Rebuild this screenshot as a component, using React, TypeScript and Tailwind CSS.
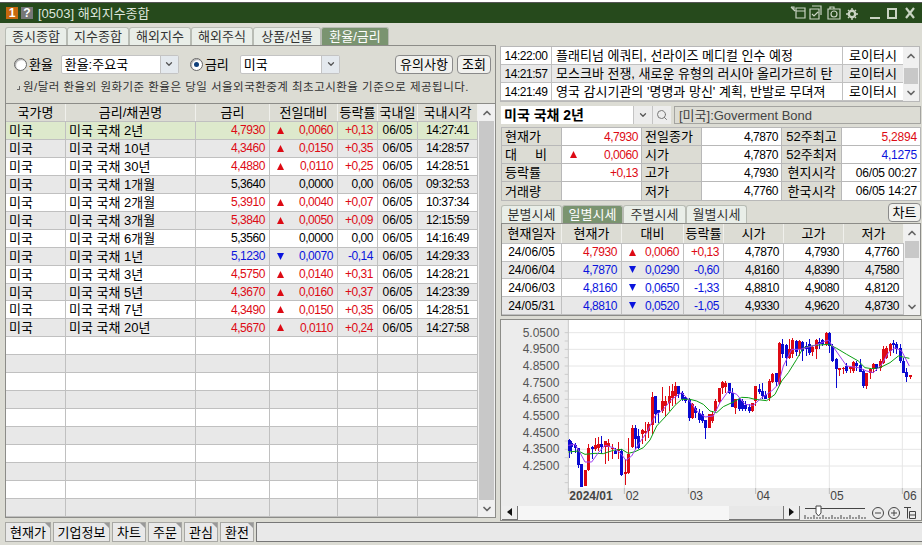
import React from "react";
import { ChevronUp, ChevronDown, Search } from "lucide-react";

const RED = "text-[#dd0a14]";
const BLUE = "text-[#0a14dd]";
const NUM = "text-[12px] tracking-[-0.45px]";
const PLAIN = "text-[12px]";

type Tone = "r" | "b" | "k";
const toneClass = (t: Tone) => (t === "r" ? RED : t === "b" ? BLUE : "text-black");

const Tri = ({ up }: { up: boolean }) => (
  <svg width="9" height="9" viewBox="0 0 9 9" className="shrink-0">
    <polygon points={up ? "4.5,1 8,8 1,8" : "1,1 8,1 4.5,8"} fill={up ? "#dd0a14" : "#0a14dd"} />
  </svg>
);

const VScroll = ({ thumbClass, wide }: { thumbClass: string; wide?: boolean }) => (
  <div className={`flex flex-col bg-[#f0f0f0] ${wide ? "w-[18px]" : "w-[17px]"}`}>
    <div className="flex h-[17px] items-center justify-center">
      <ChevronUp size={12} strokeWidth={3.5} color="#666" />
    </div>
    <div className="flex min-h-0 flex-1 flex-col px-[1px]">
      <div className={`bg-[#c8c8c8] ${thumbClass}`} />
    </div>
    <div className="flex h-[17px] items-center justify-center">
      <ChevronDown size={12} strokeWidth={3.5} color="#666" />
    </div>
  </div>
);

const titleTabs = ["종시종합", "지수종합", "해외지수", "해외주식", "상품/선물", "환율/금리"];
const titleTabW = ["w-[62px]", "w-[62px]", "w-[62px]", "w-[62px]", "w-[68px]", "w-[68px]"];

const Tab = ({ label, w, active }: { label: string; w: string; active?: boolean }) => (
  <div
    className={`flex h-[18px] items-center justify-center rounded-t-[3px] border border-b-0 border-[#b8bcb4] ${w} ${
      active ? "bg-[#7a9470] text-white" : "bg-[#e9eee8] text-[#333]"
    }`}
  >
    {label}
  </div>
);

const Radio = ({ on }: { on?: boolean }) => (
  <div className="flex h-[13px] w-[13px] items-center justify-center rounded-full border border-[#666] bg-white shadow-[inset_1px_1px_1px_#aaa]">
    {on && <div className="h-[5px] w-[5px] rounded-full bg-[#0f3f7a]" />}
  </div>
);

const SelectBox = ({ label, w }: { label: string; w: string }) => (
  <div className={`flex h-[19px] items-center rounded-[2px] border border-[#c4c4c4] bg-white ${w}`}>
    <span className="flex-1 pl-[3px]">{label}</span>
    <div className="flex h-full w-[18px] items-center justify-center border-l border-[#c4c4c4] bg-[#e4e9ee]">
      <ChevronDown size={10} strokeWidth={3} color="#555" />
    </div>
  </div>
);

const Btn = ({ label, w }: { label: string; w: string }) => (
  <div className={`flex h-[19px] items-center justify-center rounded-[4px] border border-[#8a8a8a] bg-[#f1f1ee] ${w}`}>
    {label}
  </div>
);

type BondRow = [string, string, Tone, string, string, string, string];
const bonds: BondRow[] = [
  ["미국 국채 2년", "4,7930", "r", "0,0060", "+0,13", "06/05", "14:27:41"],
  ["미국 국채 10년", "4,3460", "r", "0,0150", "+0,35", "06/05", "14:28:57"],
  ["미국 국채 30년", "4,4880", "r", "0,0110", "+0,25", "06/05", "14:28:51"],
  ["미국 국채 1개월", "5,3640", "k", "0,0000", "0,00", "06/05", "09:32:53"],
  ["미국 국채 2개월", "5,3910", "r", "0,0040", "+0,07", "06/05", "10:37:34"],
  ["미국 국채 3개월", "5,3840", "r", "0,0050", "+0,09", "06/05", "12:15:59"],
  ["미국 국채 6개월", "5,3560", "k", "0,0000", "0,00", "06/05", "14:16:49"],
  ["미국 국채 1년", "5,1230", "b", "0,0070", "-0,14", "06/05", "14:29:33"],
  ["미국 국채 3년", "4,5750", "r", "0,0140", "+0,31", "06/05", "14:28:21"],
  ["미국 국채 5년", "4,3670", "r", "0,0160", "+0,37", "06/05", "14:23:39"],
  ["미국 국채 7년", "4,3490", "r", "0,0150", "+0,35", "06/05", "14:28:51"],
  ["미국 국채 20년", "4,5670", "r", "0,0110", "+0,24", "06/05", "14:27:58"],
];

const cell = "flex h-full items-center border-r border-[#c0c0c0]";
const mainW = ["w-[60px]", "w-[130px]", "w-[74px]", "w-[68px]", "w-[40px]", "w-[40px]", "w-[60px]"];

const MainHeader = () => {
  const h = ["국가명", "금리/채권명", "금리", "전일대비", "등락률", "국내일", "국내시각"];
  return (
    <div className="flex h-[18px] border-b border-[#c0c0c0] bg-[#dcdcd4]">
      {h.map((t, i) => (
        <div key={t} className={`${cell} justify-center border-r-[#f0f0ec] ${mainW[i]}`}>
          {t}
        </div>
      ))}
    </div>
  );
};

const MainRow = ({ i, r }: { i: number; r?: BondRow }) => {
  const bg = i === 0 ? "bg-[#dde9cc]" : i % 2 ? "bg-[#e8e8e8]" : "bg-white";
  const c = r ? toneClass(r[2]) : "";
  return (
    <div className={`flex h-[18px] border-b border-[#c0c0c0] ${bg}`}>
      <div className={`${cell} pl-[3px] ${mainW[0]}`}>{r && "미국"}</div>
      <div className={`${cell} pl-[3px] ${mainW[1]}`}>{r && r[0]}</div>
      <div className={`${cell} ${NUM} justify-end pr-[4px] ${c} ${mainW[2]}`}>{r && r[1]}</div>
      <div className={`${cell} ${NUM} justify-between pl-[6px] pr-[4px] ${c} ${mainW[3]}`}>
        {r && (r[2] === "k" ? <span /> : <Tri up={r[2] === "r"} />)}
        {r && <span>{r[3]}</span>}
      </div>
      <div className={`${cell} ${NUM} justify-end pr-[4px] ${c} ${mainW[4]}`}>{r && r[4]}</div>
      <div className={`${cell} ${PLAIN} justify-center ${mainW[5]}`}>{r && r[5]}</div>
      <div className={`${cell} ${NUM} justify-center ${mainW[6]}`}>{r && r[6]}</div>
    </div>
  );
};

const news = [
  ["14:22:00", "플래티넘 에쿼티, 선라이즈 메디컬 인수 예정"],
  ["14:21:57", "모스크바 전쟁, 새로운 유형의 러시아 올리가르히 탄"],
  ["14:21:49", "영국 감시기관의 '명명과 망신' 계획, 반발로 무뎌져"],
];

const infoRows: [string, string, Tone, boolean, string, string, string, string, Tone][] = [
  ["현재가", "4,7930", "r", false, "전일종가", "4,7870", "52주최고", "5,2894", "r"],
  ["대     비", "0,0060", "r", true, "시가", "4,7870", "52주최저", "4,1275", "b"],
  ["등락률", "+0,13", "r", false, "고가", "4,7930", "현지시각", "06/05 00:27", "k"],
  ["거래량", "", "k", false, "저가", "4,7760", "한국시각", "06/05 14:27", "k"],
];

const InfoLabel = ({ t, w, center }: { t: string; w: string; center?: boolean }) => (
  <div className={`flex h-full items-center whitespace-pre border-r border-[#b8b8b8] bg-[#dcdcd4] ${w} ${center ? "justify-center" : "pl-[3px]"}`}>
    {t}
  </div>
);

const dayW = ["w-[60px]", "w-[60px]", "w-[62px]", "w-[40px]", "w-[60px]", "w-[60px]", "w-[60px]"];
const daily: [string, string, Tone, string, string, string, string, string][] = [
  ["24/06/05", "4,7930", "r", "0,0060", "+0,13", "4,7870", "4,7930", "4,7760"],
  ["24/06/04", "4,7870", "b", "0,0290", "-0,60", "4,8160", "4,8390", "4,7580"],
  ["24/06/03", "4,8160", "b", "0,0650", "-1,33", "4,8810", "4,9080", "4,8120"],
  ["24/05/31", "4,8810", "b", "0,0520", "-1,05", "4,9330", "4,9620", "4,8730"],
];

// [x, R/B, high, low, bodyTop, bodyBottom] in 3x crop coordinates
type C = [number, 0 | 1, number, number, number, number];
const candles: C[] = [
  [207,1,370,425,372,405],[215,1,375,415,380,392],[225,1,380,410,388,396],[235,1,395,455,395,448],[245,1,445,512,445,512],
  [256,0,462,510,462,510],[266,0,385,465,395,462],[276,1,390,430,393,398],[285,0,365,405,388,400],[295,0,362,405,385,395],
  [304,1,360,415,385,393],[316,0,375,443,375,392],[326,0,370,435,380,392],[336,0,385,430,395,400],[346,1,395,415,405,413],
  [355,0,378,430,398,405],[365,1,398,480,405,478],[376,0,430,507,468,473],[386,0,365,475,415,470],[396,0,328,395,335,392],
  [406,1,328,400,335,370],[416,1,340,400,360,395],[426,0,340,385,342,355],[436,0,318,375,345,352],[446,0,318,365,325,345],
  [456,0,228,355,242,328],[467,1,240,320,240,295],[476,1,282,322,282,290],[487,0,212,290,255,285],[497,0,240,300,255,270],
  [507,0,210,285,240,260],[517,0,205,270,225,245],[527,0,198,265,210,240],[536,1,210,245,210,235],[547,1,225,255,232,250],
  [557,1,240,260,243,255],[567,1,245,315,250,305],[577,0,262,310,265,305],[587,1,270,305,275,290],[597,1,280,320,290,312],
  [607,1,285,322,295,315],[617,1,312,368,312,335],[627,0,295,335,295,335],[637,0,285,320,295,315],[647,0,250,290,255,285],
  [657,0,215,265,215,258],[667,0,195,235,198,215],[677,0,195,230,200,212],[687,1,200,235,200,230],[697,1,215,272,230,272],
  [707,0,250,293,250,275],[717,1,250,285,250,280],[727,1,250,285,255,278],[737,1,255,285,268,280],[747,1,265,292,272,285],
  [757,0,262,288,262,285],[767,0,210,270,210,255],[777,1,205,235,218,228],[787,1,200,250,225,240],[797,1,225,250,238,248],
  [807,0,190,255,195,245],[818,0,172,200,175,198],[828,1,170,210,172,198],[838,0,78,210,80,205],[848,1,70,125,85,115],
  [858,1,85,150,88,125],[868,0,70,130,100,125],[878,0,65,125,72,115],[888,1,72,120,75,108],[898,0,72,120,75,100],
  [908,1,75,135,78,105],[918,1,78,120,90,100],[928,1,68,118,85,112],[938,0,90,120,92,108],[948,0,70,128,72,100],
  [958,1,65,100,78,85],[968,1,70,90,72,85],[978,0,48,90,50,85],[989,1,48,110,50,90],[998,1,85,138,90,135],
  [1008,1,125,215,130,160],[1018,0,155,180,155,162],[1030,0,152,175,155,160],[1040,1,140,170,150,165],[1050,0,150,170,152,160],
  [1060,0,135,170,138,165],[1070,1,135,165,140,150],[1080,1,130,168,148,168],[1090,1,160,215,165,210],[1100,0,170,220,170,210],
  [1110,0,155,190,158,172],[1120,0,142,172,145,160],[1130,1,143,165,145,158],[1140,0,130,165,135,155],[1150,0,90,145,100,140],
  [1160,0,90,130,95,125],[1170,0,82,120,85,105],[1180,1,72,110,80,88],[1190,1,78,115,85,100],[1200,1,85,140,95,135],
  [1210,1,125,170,135,170],[1220,1,155,198,168,182],[1231,0,176,188,178,183],
];

const green =
  "205,408 235,405 255,415 285,412 310,413 340,403 365,400 385,412 405,407 430,395 450,372 470,330 500,298 525,268 545,250 570,250 590,255 610,265 630,285 650,290 670,272 700,258 725,244 745,245 765,250 800,254 825,235 845,195 865,170 890,130 910,95 945,88 985,85 1010,97 1040,115 1075,135 1095,155 1115,158 1140,155 1170,140 1195,120 1228,127";
const purple =
  "205,388 225,385 240,410 255,438 275,438 295,410 315,388 340,395 360,410 378,433 395,420 415,385 440,350 465,300 490,280 515,250 545,230 565,250 590,285 615,303 640,300 660,260 685,225 710,235 735,265 760,268 785,245 815,225 835,205 850,150 875,100 900,100 945,88 985,72 1005,100 1040,150 1075,155 1100,165 1120,170 1145,145 1165,110 1185,95 1205,105 1228,150";

const yLabels = ["5.0500", "4.9500", "4.8500", "4.7500", "4.6500", "4.5500", "4.4500", "4.3500", "4.2500"];
const vLines = [373, 565, 767, 988, 1207];

const Chart = () => (
  <svg viewBox="3 12 1260 555" className="block h-[185px] w-[420px]">
    <rect x="3" y="12" width="1260" height="555" fill="#ececec" />
    <rect x="205" y="12" width="1058" height="504" fill="#fff" />
    {yLabels.map((l, i) => (
      <g key={l}>
        <line x1="205" x2="1263" y1={50 + i * 50} y2={50 + i * 50} stroke="#e6e6e6" strokeWidth="3" />
        <text x="178" y={62 + i * 50} textAnchor="end" fontSize="36" fill="#555" fontFamily="Liberation Sans">
          {l}
        </text>
      </g>
    ))}
    {Array.from({ length: 19 }, (_, i) => (
      <line key={i} x1="194" x2="204" y1={50 + i * 25} y2={50 + i * 25} stroke="#ccc" strokeWidth="3" />
    ))}
    {vLines.map((x) => (
      <line key={x} x1={x} x2={x} y1="12" y2="516" stroke="#e6e6e6" strokeWidth="3" />
    ))}
    <line x1="205" x2="205" y1="12" y2="516" stroke="#c8c8c8" strokeWidth="3" />
    {candles.map(([x, b, hi, lo, t, e]) => (
      <g key={x} fill={b ? "#0b0bd0" : "#dd0a14"} shapeRendering="crispEdges">
        <rect x={x - 1.5} y={hi} width="3" height={lo - hi} />
        <rect x={x - 4.5} y={t} width="9" height={Math.max(e - t, 3)} />
      </g>
    ))}
    <polyline points={green} fill="none" stroke="#0c9f14" strokeWidth="3" />
    <polyline points={purple} fill="none" stroke="#a040f0" strokeWidth="3" />
    {[205, ...vLines].map((x) => (
      <line key={x} x1={x} x2={x} y1="516" y2="534" stroke="#bbb" strokeWidth="3" />
    ))}
    <text x="208" y="552" fontSize="36" fontWeight="700" fill="#444" fontFamily="Liberation Sans">2024/01</text>
    {([["02", 377], ["03", 569], ["04", 770], ["05", 991], ["06", 1210]] as [string, number][]).map(([t, x]) => (
      <text key={t} x={x} y="552" fontSize="36" fill="#444" fontFamily="Liberation Sans">{t}</text>
    ))}
  </svg>
);

const ArrowBtn = ({ right }: { right?: boolean }) => (
  <div className="flex h-[14px] w-[16px] items-center justify-center border-b border-r border-[#777] bg-[#eeeeee]">
    <svg width="5" height="8" viewBox="0 0 5 8">
      <polygon points={right ? "0,0 5,4 0,8" : "5,0 0,4 5,8"} fill="#111" />
    </svg>
  </div>
);

const ChartControls = () => (
  <div className="flex h-[15px] items-center bg-[#ececec] pl-[1px]">
    <ArrowBtn />
    <div className="h-[14px] w-[211px] bg-[#f6f6f6] bg-[radial-gradient(#e2e2e2_0.5px,transparent_0.5px)] bg-[length:2px_2px]" />
    <div className="h-[14px] w-[55px] border-b border-r border-[#777] bg-[#e8e8e8]" />
    <ArrowBtn right />
    <svg width="118" height="15" viewBox="0 0 118 15" className="ml-[3px] shrink-0" fill="none" stroke="#444">
      <line x1="2" x2="62" y1="3.5" y2="3.5" />
      <path d="M13 1h5v7l-2.5 3l-2.5-3z" fill="#fff" />
      {Array.from({ length: 21 }, (_, i) => (
        <line key={i} x1={2 + i * 3} x2={2 + i * 3} y1={i % 3 ? 12 : 10} y2="14" />
      ))}
      <circle cx="75" cy="8" r="5.5" />
      <line x1="72" x2="78" y1="8" y2="8" />
      <circle cx="91" cy="8" r="5.5" />
      <line x1="88" x2="94" y1="8" y2="8" />
      <line x1="91" x2="91" y1="5" y2="11" />
      <path d="M101 2.5h7M104.5 2.5v11M106.5 6.5h6v7h-6zM106.5 10h6" />
    </svg>
  </div>
);

const TitleIcons = () => (
  <svg width="130" height="20" viewBox="0 0 130 20" fill="none" stroke="#c9d3c3" strokeWidth="1.2" className="shrink-0">
    <g transform="translate(4 0)">
      <path d="M1 4h3v3M1 4l4 4M6 5h9v10H6zM6 8h9" />
      <path d="M22 3h9v9M20 6h9v10h-9zM22 11l2 2l4-4" />
    </g>
    <g transform="translate(3 0)">
      <path d="M39 6h12v10H39zM41 6V4h4v2" />
      <circle cx="45" cy="11" r="3" />
    </g>
    <g transform="translate(4 0)">
      <circle cx="62" cy="11" r="3.2" strokeWidth="2.4" />
      <path d="M62 5v2M62 15v2M56 11h2M66 11h2M58 7l1 1M65 14l1 1M66 7l-1 1M59 14l-1 1" strokeWidth="1.4" />
    </g>
    <path d="M84 15h10" strokeWidth="2" />
    <rect x="102" y="6" width="8" height="9" strokeWidth="2" />
    <path d="M120 5l8 10M128 5l-8 10" strokeWidth="2.2" />
  </svg>
);

const tools: [string, string][] = [
  ["현재가", "w-[46px]"],
  ["기업정보", "w-[57px]"],
  ["차트", "w-[34px]"],
  ["주문", "w-[34px]"],
  ["관심", "w-[34px]"],
  ["환전", "w-[34px]"],
];

export default function App() {
  return (
    <div className="flex h-[545px] w-[922px] flex-col overflow-hidden bg-[#dcdcd4] font-['Liberation_Sans','Noto_Sans_CJK_KR',sans-serif] text-[13px] leading-none text-black">
      <div className="h-[2px] bg-white" />
      <div className="flex h-[21px] items-center border-t border-[#555] bg-[#264a1c] pl-[6px] pr-[6px]">
        <div className="flex h-[12px] w-[12px] items-center justify-center bg-[#c8690f] text-[12px] font-bold text-white">1</div>
        <div className="ml-[3px] flex h-[12px] w-[12px] items-center justify-center bg-[#777] text-[12px] font-bold text-white">?</div>
        <div className="ml-[5px] flex-1 text-[13px] text-[#dfe6dc]">[0503] 해외지수종합</div>
        <TitleIcons />
      </div>

      <div className="flex min-h-0 flex-1">
        {/* left */}
        <div className="ml-[5px] mt-[4px] flex w-[491px] flex-col">
          <div className="flex">
            {titleTabs.map((t, i) => (
              <Tab key={t} label={t} w={titleTabW[i]} active={i === 5} />
            ))}
          </div>
          <div className="flex h-[58px] flex-col border border-b-0 border-[#8c8c88]">
            <div className="mt-[8px] flex h-[20px] items-center pl-[8px] pr-[4px]">
              <Radio />
              <span className="ml-[2px] w-[32px]">환율</span>
              <SelectBox label="환율:주요국" w="w-[119px]" />
              <div className="ml-[11px]"><Radio on /></div>
              <span className="ml-[2px] w-[35px]">금리</span>
              <SelectBox label="미국" w="w-[101px]" />
              <div className="ml-[55px]"><Btn label="유의사항" w="w-[58px]" /></div>
              <div className="ml-[4px]"><Btn label="조회" w="w-[34px]" /></div>
            </div>
            <div className="mt-[8px] flex items-center pl-[11px] text-[11.5px] text-[#333]">
              <span className="mr-[3px] inline-block h-[4px] w-[3px] border-b border-r border-[#666]" />
              <span className="tracking-[0.48px]">원/달러 환율외 원화기준 환율은 당일 서울외국환중계 최초고시환율 기준으로 제공됩니다.</span>
            </div>
          </div>
          <div className="flex h-[415px] border border-[#8c8c88] bg-white">
            <div className="flex w-[472px] flex-col">
              <MainHeader />
              {Array.from({ length: 22 }, (_, i) => (
                <MainRow key={i} i={i} r={bonds[i]} />
              ))}
            </div>
            <VScroll thumbClass="h-[379px]" />
          </div>
        </div>

        {/* right */}
        <div className="ml-[4px] flex w-[422px] flex-col pt-[23px]">
          <div className="flex h-[56px] w-[420px] border border-[#b8b8b8] bg-white">
            <div className="flex w-[402px] flex-col">
              {news.map(([t, n], i) => (
                <div key={t} className={`flex h-[18px] items-center border-b border-[#c0c0c0] ${i === 1 ? "bg-[#e8e8e8]" : "bg-white"}`}>
                  <div className={`flex h-full w-[51px] items-center justify-center border-r border-[#c0c0c0] ${NUM}`}>{t}</div>
                  <div className="flex h-full w-[291px] items-center overflow-hidden whitespace-nowrap border-r border-[#c0c0c0] pl-[4px]">{n}</div>
                  <div className="flex h-full w-[60px] items-center justify-center">로이터시</div>
                </div>
              ))}
            </div>
            <VScroll thumbClass="mt-[4px] h-[16px]" wide />
          </div>

          <div className="mt-[4px] flex h-[19px] items-center pl-[1px]">
            <div className="flex h-full w-[132px] items-center bg-white pl-[3px] text-[14px] font-bold">미국 국채 2년</div>
            <div className="flex h-full w-[19px] items-center justify-center border-l border-[#c4c4c4] bg-[#ececec]">
              <ChevronDown size={10} strokeWidth={3} color="#555" />
            </div>
            <div className="flex h-full w-[19px] items-center justify-center border-l border-[#c4c4c4] bg-[#ececec]">
              <Search size={12} color="#777" />
            </div>
            <div className="ml-[3px] flex h-full w-[247px] items-center border border-[#a4a4a0] bg-[#dcdcd4] pl-[4px] text-[#444]">
              [미국]:Goverment Bond
            </div>
          </div>

          <div className="ml-[1px] mt-[3px] w-[420px] border border-[#b8b8b8] bg-white">
            {infoRows.map((r, i) => (
              <div key={r[0]} className={`flex h-[18px] items-center ${i < 3 ? "border-b border-[#b8b8b8]" : ""}`}>
                <InfoLabel t={r[0]} w="w-[60px]" />
                <div className={`flex h-full w-[80px] items-center justify-between border-r border-[#b8b8b8] pl-[7px] pr-[3px] ${NUM} ${toneClass(r[2])}`}>
                  {r[3] ? <Tri up /> : <span />}
                  <span>{r[1]}</span>
                </div>
                <InfoLabel t={r[4]} w="w-[60px]" />
                <div className={`flex h-full w-[80px] items-center justify-end border-r border-[#b8b8b8] pr-[3px] ${NUM}`}>{r[5]}</div>
                <InfoLabel t={r[6]} w="w-[60px]" center />
                <div className={`flex h-full flex-1 items-center justify-end pr-[3px] text-[12px] tracking-[-0.2px] ${toneClass(r[8])}`}>{r[7]}</div>
              </div>
            ))}
          </div>

          <div className="ml-[1px] mt-[2px] flex h-[20px] w-[420px] items-end">
            <Tab label="분별시세" w="w-[61px]" />
            <Tab label="일별시세" w="w-[61px]" active />
            <Tab label="주별시세" w="w-[63px]" />
            <Tab label="월별시세" w="w-[61px]" />
            <div className="mb-[1px] ml-auto"><Btn label="차트" w="w-[33px]" /></div>
          </div>

          <div className="ml-[1px] flex h-[93px] w-[420px] border border-[#8c8c88] bg-white">
            <div className="flex w-[402px] flex-col">
              <div className="flex h-[20px] border-b border-[#c0c0c0] bg-[#dcdcd4]">
                {["현재일자", "현재가", "대비", "등락률", "시가", "고가", "저가"].map((t, i) => (
                  <div key={t} className={`${cell} justify-center border-r-[#f0f0ec] ${dayW[i]}`}>{t}</div>
                ))}
              </div>
              {daily.map((r, i) => {
                const c = toneClass(r[2]);
                return (
                  <div key={r[0]} className={`flex h-[18px] border-b border-[#c0c0c0] ${NUM} ${i % 2 ? "bg-[#e8e8e8]" : "bg-white"}`}>
                    <div className={`${cell} ${PLAIN} justify-center tracking-normal ${dayW[0]}`}>{r[0]}</div>
                    <div className={`${cell} justify-end pr-[4px] ${c} ${dayW[1]}`}>{r[1]}</div>
                    <div className={`${cell} justify-between pl-[6px] pr-[4px] ${c} ${dayW[2]}`}>
                      <Tri up={r[2] === "r"} />
                      <span>{r[3]}</span>
                    </div>
                    <div className={`${cell} justify-end pr-[4px] ${c} ${dayW[3]}`}>{r[4]}</div>
                    <div className={`${cell} justify-end pr-[4px] ${dayW[4]}`}>{r[5]}</div>
                    <div className={`${cell} justify-end pr-[4px] ${dayW[5]}`}>{r[6]}</div>
                    <div className={`${cell} justify-end pr-[4px] ${dayW[6]}`}>{r[7]}</div>
                  </div>
                );
              })}
            </div>
            <VScroll thumbClass="h-[17px]" wide />
          </div>

          <div className="mt-[3px] w-[422px] border border-[#8c8c88] bg-white">
            <Chart />
            <ChartControls />
          </div>
        </div>
      </div>

      <div className="flex h-[24px] items-center pb-[2px] pl-[5px]">
        <div className="flex gap-[2px]">
          {tools.map(([t, w]) => (
            <div key={t} className={`relative flex h-[20px] items-center justify-center border border-[#a8a8a4] bg-[#e9e9e9] ${w}`}>
              {t}
              <span className="absolute right-0 top-0 h-0 w-0 border-l-[5px] border-t-[5px] border-l-transparent border-t-[#999]" />
            </div>
          ))}
        </div>
        <div className="ml-[2px] h-[20px] flex-1 border border-r-0 border-[#777] bg-[#e9e9e9]" />
      </div>
    </div>
  );
}
